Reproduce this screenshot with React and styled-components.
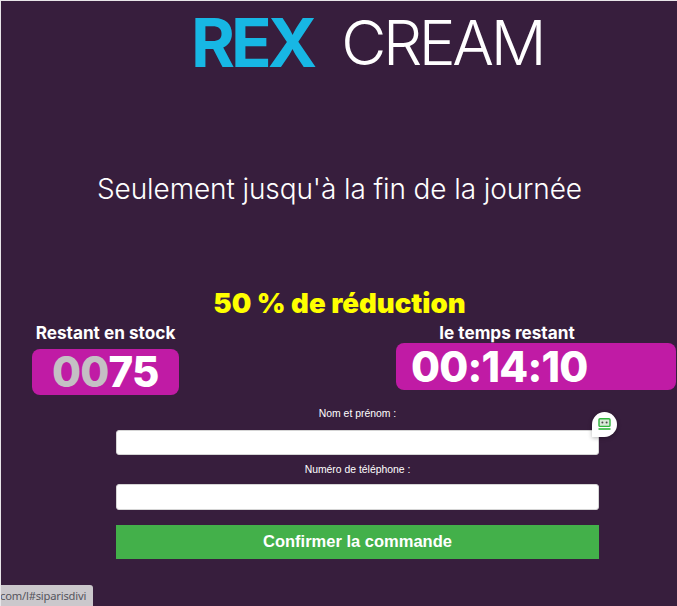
import styled, { createGlobalStyle } from "styled-components";

const GlobalStyle = createGlobalStyle`
  html, body {
    margin: 0;
    padding: 0;
    background: #371e3d;
  }
`;

const Page = styled.div`
  position: relative;
  box-sizing: border-box;
  width: 677px;
  height: 606px;
  overflow: hidden;
  padding-top: 1px;
  padding-left: 1px;
  background: #371e3d;
  border-top: 1px solid #e8e6e9;
  border-left: 1px solid #e8e6e9;
  font-family: "Inter", "Liberation Sans", sans-serif;
  color: #fff;
`;

const Logo = styled.div`
  display: flex;
  align-items: center;
  gap: 28px;
  height: 76px;
  padding: 6px 0 0 189px;
  box-sizing: border-box;
  line-height: 76px;
`;

const LogoRex = styled.span`
  color: #17b7e4;
  font-size: 67px;
  font-weight: 700;
  letter-spacing: -4px;
`;

const LogoCream = styled.span`
  color: #fff;
  font-size: 62px;
  font-weight: 300;
  letter-spacing: -3.4px;
`;

const Headline = styled.h1`
  margin: 93px 0 0;
  font-size: 28px;
  line-height: 36px;
  font-weight: 300;
  letter-spacing: -0.1px;
  text-align: center;
`;

const Offer = styled.h2`
  margin: 80px 0 0;
  color: #ffff00;
  font-size: 27.6px;
  line-height: 32px;
  font-weight: 900;
  text-align: center;
`;

const Stats = styled.div`
  display: flex;
  justify-content: space-between;
  align-items: flex-start;
  padding: 0 1px 0 30px;
  margin-top: 4px;
`;

const Stat = styled.div`
  width: ${(p) => p.$width}px;
`;

const StatLabel = styled.div`
  font-size: 17.2px;
  line-height: 20px;
  font-weight: 700;
  text-align: center;
  margin-bottom: ${(p) => p.$gap}px;
  padding-right: ${(p) => p.$shift || 0}px;
`;

const Counter = styled.div`
  display: flex;
  align-items: center;
  box-sizing: border-box;
  height: ${(p) => p.$height}px;
  padding-left: ${(p) => p.$inset}px;
  border-radius: 8px;
  background: #c01ba5;
  font-size: 42px;
  line-height: 1;
  font-weight: 800;
  letter-spacing: -0.8px;
  color: #fff;
`;

const Dim = styled.span`
  color: #c4c0c4;
`;

const Form = styled.form`
  position: relative;
  width: 483px;
  margin: 12px 0 0 114px;
`;

const FieldLabel = styled.label`
  display: block;
  font-family: "Liberation Sans", Arial, sans-serif;
  font-size: 10.4px;
  line-height: 14px;
  text-align: center;
  margin-bottom: ${(p) => p.$gap}px;
`;

const Input = styled.input`
  display: block;
  box-sizing: border-box;
  width: 100%;
  height: ${(p) => p.$height}px;
  margin-bottom: ${(p) => p.$gap}px;
  border: 1px solid #d5d5d5;
  border-radius: 3px;
  background: #fff;
`;

const Submit = styled.button`
  display: block;
  width: 100%;
  height: 34px;
  padding: 0 0 2px;
  border: 0;
  background: #43b04a;
  color: #fff;
  font-family: "Liberation Sans", Arial, sans-serif;
  font-size: 16.5px;
  font-weight: 700;
`;

const Badge = styled.div`
  position: absolute;
  top: 5px;
  right: -18px;
  display: flex;
  align-items: center;
  justify-content: center;
  width: 25px;
  height: 25px;
  border-radius: 50% 50% 50% 0;
  background: #fff;
  box-shadow: 0 1px 4px rgba(0, 0, 0, 0.3);
`;

const StatusTip = styled.div`
  position: absolute;
  left: -1px;
  bottom: 0;
  width: 93px;
  height: 21px;
  overflow: hidden;
  border-top-right-radius: 3px;
  background: #cbc8cc;
  color: #55555d;
  font-family: "Noto Sans", "Liberation Sans", sans-serif;
  font-size: 11.2px;
  letter-spacing: -0.2px;
  line-height: 22px;
  white-space: nowrap;
`;

const BotIcon = () => (
  <svg width="13" height="13" viewBox="0 0 13 13" aria-hidden="true">
    <rect x="1" y="0.8" width="11" height="7.6" rx="1" fill="#d8e8d8" stroke="#2fb53c" strokeWidth="1.4" />
    <circle cx="4.4" cy="4.6" r="1" fill="#4a4a4a" />
    <circle cx="8.6" cy="4.6" r="1" fill="#4a4a4a" />
    <rect x="0.5" y="10.2" width="12" height="1.6" fill="#2fb53c" />
  </svg>
);

export default function App() {
  return (
    <Page>
      <GlobalStyle />
      <Logo>
        <LogoRex>REX</LogoRex>
        <LogoCream>CREAM</LogoCream>
      </Logo>
      <Headline>Seulement jusqu'à la fin de la journée</Headline>
      <Offer>50 % de réduction</Offer>
      <Stats>
        <Stat $width={147}>
          <StatLabel $gap={6}>Restant en stock</StatLabel>
          <Counter $height={46} $inset={20}>
            <Dim>00</Dim>75
          </Counter>
        </Stat>
        <Stat $width={280}>
          <StatLabel $gap={0} $shift={58}>le temps restant</StatLabel>
          <Counter $height={47} $inset={15}>00:14:10</Counter>
        </Stat>
      </Stats>
      <Form>
        <FieldLabel $gap={9}>Nom et prénom :</FieldLabel>
        <Input $height={25} $gap={8} />
        <FieldLabel $gap={7}>Numéro de téléphone :</FieldLabel>
        <Input $height={26} $gap={15} />
        <Submit type="button">Confirmer la commande</Submit>
        <Badge>
          <BotIcon />
        </Badge>
      </Form>
      <StatusTip>com/l#siparisdivi</StatusTip>
    </Page>
  );
}
